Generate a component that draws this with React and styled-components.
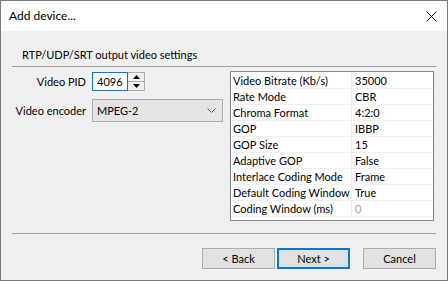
import React from "react";
import styled, { createGlobalStyle } from "styled-components";

const GlobalStyle = createGlobalStyle`
  html, body {
    margin: 0;
    padding: 0;
    background: #f0f0f0;
  }
  body {
    font-family: Lato, "Noto Sans", sans-serif;
    font-size: 11px;
    color: #000;
  }
`;

const properties = [
  { name: "Video Bitrate (Kb/s)", value: "35000" },
  { name: "Rate Mode", value: "CBR" },
  { name: "Chroma Format", value: "4:2:0" },
  { name: "GOP", value: "IBBP" },
  { name: "GOP Size", value: "15" },
  { name: "Adaptive GOP", value: "False" },
  { name: "Interlace Coding Mode", value: "Frame" },
  { name: "Default Coding Window", value: "True" },
  { name: "Coding Window (ms)", value: "0", muted: true },
];

class App extends React.Component {
  render() {
    return (
      <>
        <GlobalStyle />
        <Window>
          <TitleBar>
            <Title>Add device...</Title>
            <CloseButton>
              <svg width="11" height="11" viewBox="0 0 11 11">
                <path d="M0.5 0.5 L10.5 10.5 M10.5 0.5 L0.5 10.5" stroke="#000" strokeWidth="1" />
              </svg>
            </CloseButton>
          </TitleBar>
          <Body>
            <SectionTitle>RTP/UDP/SRT output video settings</SectionTitle>
            <Rule />
            <Content>
              <Fields>
                <FieldLabel>Video PID</FieldLabel>
                <SpinBox>
                  <SpinInput>4096</SpinInput>
                  <SpinButtons>
                    <SpinButton>
                      <svg width="7" height="4" viewBox="0 0 7 4">
                        <path d="M0 4 L3.5 0 L7 4 Z" fill="#000" />
                      </svg>
                    </SpinButton>
                    <SpinButton $bottom>
                      <svg width="7" height="4" viewBox="0 0 7 4">
                        <path d="M0 0 L3.5 4 L7 0 Z" fill="#000" />
                      </svg>
                    </SpinButton>
                  </SpinButtons>
                </SpinBox>
                <FieldLabel>Video encoder</FieldLabel>
                <Combo>
                  <span>MPEG-2</span>
                  <svg width="9" height="5" viewBox="0 0 9 5">
                    <path d="M0.5 0.5 L4.5 4.5 L8.5 0.5" stroke="#606060" fill="none" strokeWidth="1" />
                  </svg>
                </Combo>
              </Fields>
              <PropertyGrid>
                {properties.map((p) => (
                  <PropRow key={p.name}>
                    <PropName>{p.name}</PropName>
                    <PropValue $muted={p.muted}>{p.value}</PropValue>
                  </PropRow>
                ))}
              </PropertyGrid>
            </Content>
            <Rule />
            <ButtonBar>
              <Button>&lt; Back</Button>
              <Button $default>Next &gt;</Button>
              <Button $gap>Cancel</Button>
            </ButtonBar>
          </Body>
        </Window>
      </>
    );
  }
}

const Window = styled.div`
  width: 448px;
  height: 281px;
  box-sizing: border-box;
  border: 1px solid #7a7a7a;
  display: flex;
  flex-direction: column;
  background: #f0f0f0;
`;

const TitleBar = styled.div`
  height: 30px;
  flex-shrink: 0;
  background: #fff;
  display: flex;
  align-items: center;
  justify-content: space-between;
  padding-left: 8px;
`;

const Title = styled.div`
  font-size: 12px;
  line-height: 16px;
  color: #000;
`;

const CloseButton = styled.div`
  width: 32px;
  height: 30px;
  display: flex;
  align-items: center;
  justify-content: center;
`;

const Body = styled.div`
  flex: 1;
  display: flex;
  flex-direction: column;
  padding: 0 11px 0 11px;
`;

const SectionTitle = styled.div`
  margin: 16px 0 0 10px;
  line-height: 16px;
`;

const Rule = styled.div`
  height: 1px;
  background: #a0a0a0;
  margin-top: 3px;
`;

const Content = styled.div`
  display: flex;
  gap: 8px;
  height: 163px;
  padding-top: 4px;
  box-sizing: border-box;
`;

const Fields = styled.div`
  display: grid;
  grid-template-columns: 74px auto;
  grid-template-rows: 19px 23px;
  column-gap: 6px;
  row-gap: 8px;
  align-items: center;
  align-content: start;
  width: 210px;
  margin-top: 1px;
`;

const FieldLabel = styled.div`
  text-align: right;
  white-space: nowrap;
`;

const SpinBox = styled.div`
  display: flex;
  height: 19px;
`;

const SpinInput = styled.div`
  width: 36px;
  box-sizing: border-box;
  border: 1px solid #0078d7;
  background: #fff;
  padding-left: 4px;
  line-height: 17px;
`;

const SpinButtons = styled.div`
  width: 17px;
  box-sizing: border-box;
  border: 1px solid #adadad;
  border-left: none;
  display: flex;
  flex-direction: column;
  background: #f0f0f0;
`;

const SpinButton = styled.div`
  flex: 1;
  display: flex;
  align-items: center;
  justify-content: center;
  border-top: ${(p) => (p.$bottom ? "1px solid #adadad" : "none")};
`;

const Combo = styled.div`
  width: 131px;
  height: 23px;
  box-sizing: border-box;
  border: 1px solid #adadad;
  background: #e5e5e5;
  display: flex;
  align-items: center;
  justify-content: space-between;
  padding: 0 6px 0 4px;
`;

const PropertyGrid = styled.div`
  width: 204px;
  height: 150px;
  box-sizing: border-box;
  border: 1px solid #828790;
  background: #fff;
  padding-top: 1px;
`;

const PropRow = styled.div`
  display: grid;
  grid-template-columns: 121px 1fr;
  height: 16px;
  border-bottom: 1px solid #f0f0f0;
  box-sizing: border-box;
`;

const PropName = styled.div`
  padding-left: 2px;
  line-height: 15px;
  white-space: nowrap;
  overflow: hidden;
  border-right: 1px solid #f0f0f0;
`;

const PropValue = styled.div`
  padding-left: 3px;
  line-height: 15px;
  color: ${(p) => (p.$muted ? "#a0a0a0" : "#000")};
`;

const ButtonBar = styled.div`
  display: flex;
  justify-content: flex-end;
  margin-top: 14px;
`;

const Button = styled.div`
  width: 73px;
  height: 21px;
  box-sizing: border-box;
  border: ${(p) => (p.$default ? "2px solid #0078d7" : "1px solid #adadad")};
  background: #e1e1e1;
  display: flex;
  align-items: center;
  justify-content: center;
  margin-left: ${(p) => (p.$gap ? "13px" : "2px")};
`;

export default App;
